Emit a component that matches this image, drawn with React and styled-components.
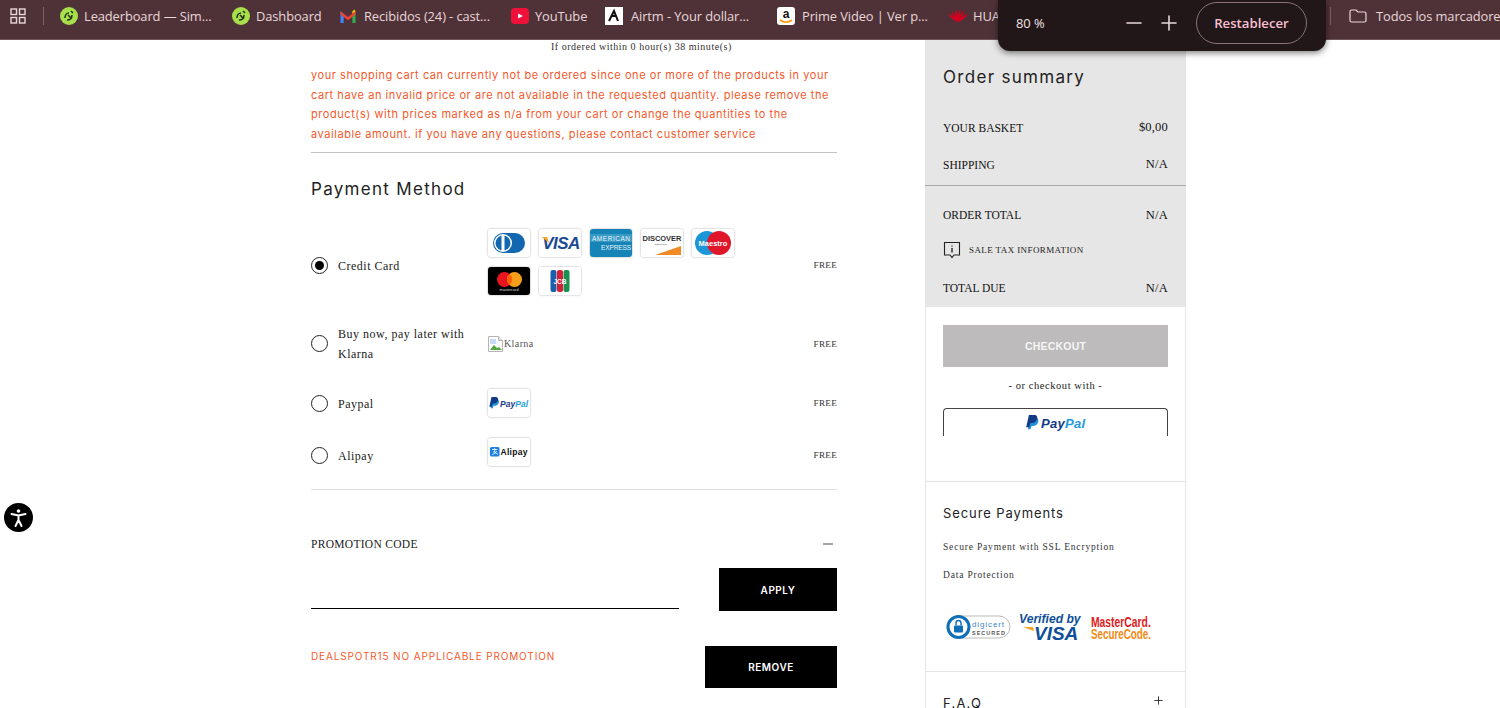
import React from "react";
import styled, { createGlobalStyle } from "styled-components";
import { Minus, Plus } from "lucide-react";

const Global = createGlobalStyle`
  html, body { margin: 0; padding: 0; background: #fff; height: 708px; overflow: hidden; }
  * { box-sizing: border-box; }
`;

const sans = `"Inter", "Liberation Sans", sans-serif`;
const serif = `"Liberation Serif", serif`;
const ui = `"Open Sans", "Noto Sans", sans-serif`;

const Page = styled.div`position: relative; width: 1500px; height: 708px; overflow: hidden;`;

/* browser bar */
const Bar = styled.header`
  height: 40px; background: #4f3238; border-bottom: 1px solid #6e565b; display: flex; align-items: center;
  padding-bottom: 8px; padding-left: 10px; overflow: hidden; white-space: nowrap;
  font: 12.9px ${ui}; color: #e9d7d8;
  svg { flex: none; }
`;
const BarDivider = styled.span`width: 1px; height: 18px; background: #7a6166; flex: none; margin: ${p => p.$m};`;
const Mark = styled.a`display: flex; align-items: center; gap: ${p => p.$gap || 6}px; flex: none; width: ${p => p.$w}px;`;
const MarkLabel = styled.span`letter-spacing: -0.1px;`;

const ZoomPop = styled.div`
  position: absolute; left: 998px; top: 0; width: 328px; height: 51px; background: #211618;
  border-radius: 0 0 12px 12px; box-shadow: 0 2px 6px rgba(0,0,0,.5);
  display: flex; align-items: center; color: #f1e4e5; font: 12.9px ${ui}; padding: 0 19px 6px 18px;
`;
const ZoomValue = styled.span`width: 100px;`;
const ZoomBtn = styled.span`width: 35px; display: flex; justify-content: center; color: #e6d8da;`;
const Reset = styled.span`
  margin-left: 10px; width: 111px; height: 42px; border: 1px solid #8a7276; border-radius: 21px; color: #f9c0d4;
  display: flex; align-items: center; justify-content: center; font-weight: 600; font-size: 13.2px;
`;

/* layout */
const Layout = styled.div`display: flex; padding-left: 311px; gap: 88px; align-items: flex-start;`;
const Main = styled.main`width: 526px; flex: none;`;
const Side = styled.aside`width: 261px; flex: none; border-right: 1px solid #e6e6e6; border-left: 1px solid #e6e6e6;`;

const Note = styled.div`font: 10px/12px ${serif}; letter-spacing: .52px; color: #333; padding: 1px 0 0 240px;`;
const ErrorText = styled.p`margin: 13px 0 0; font: 11px/19.6px ${sans}; letter-spacing: .56px; color: #f3592c;`;
const Rule = styled.hr`margin: ${p => p.$m || 0}; border: 0; height: 1px; background: ${p => p.$c || "#c4c4c4"};`;
const Heading = styled.h2`margin: 24px 0 0; font: 400 17px/24px ${sans}; letter-spacing: 1.3px; color: #222;`;

const Method = styled.label`
  display: grid; grid-template-columns: 27px 150px 1fr auto; align-items: center; margin-top: ${p => p.$top}px;
  min-height: ${p => p.$h}px;
`;
const Radio = styled.span`
  width: 17px; height: 17px; border-radius: 50%; border: 1.4px solid #222; display: flex; align-items: center; justify-content: center;
  &::after { content: ""; width: 9px; height: 9px; border-radius: 50%; background: #000; display: ${p => (p.$on ? "block" : "none")}; }
`;
const MethodName = styled.span`font: 12px/20px ${serif}; letter-spacing: .5px; color: #222; padding-top: 1px;`;
const Free = styled.span`font: 9.2px ${serif}; letter-spacing: .25px; color: #333;`;
const Cards = styled.div`display: flex; flex-wrap: wrap; gap: 10px 9px; width: 260px; align-self: ${p => (p.$top ? "start" : "center")};`;
const Card = styled.svg`width: 42px; height: 28px; flex: none; display: block; border-radius: 3px; box-shadow: 0 0 2px rgba(0,0,0,.4);`;
const Broken = styled.span`display: flex; align-items: center; font: 10px ${serif}; letter-spacing: .4px; color: #555;`;

const PromoHead = styled.div`display: flex; justify-content: space-between; align-items: center; margin-top: 46px; padding-right: 4px;`;
const PromoLabel = styled.span`font: 11.5px/16px ${serif}; letter-spacing: .3px; color: #222;`;
const Dash = styled.span`width: 10px; height: 2px; background: #a5a5a5;`;
const PromoRow = styled.div`display: flex; justify-content: space-between; align-items: flex-start; margin-top: ${p => p.$top}px;`;
const PromoInput = styled.div`width: 368px; height: 41px; border-bottom: 1.5px solid #000;`;
const BlackBtn = styled.button`
  width: ${p => p.$w}px; height: ${p => p.$h}px; background: #000; border: 0; color: #fff; padding: 0;
  font: 600 10px ${sans}; letter-spacing: .5px;
`;
const PromoMsg = styled.span`font: 10px/20px ${sans}; letter-spacing: .86px; color: #f3592c;`;

/* summary */
const Summary = styled.section`background: #e6e6e6; padding-top: 24px; height: 267px; margin: 0 -1px;`;
const SumTitle = styled.h3`margin: 0 0 19px; padding: 0 18px; font: 400 17px/26px ${sans}; letter-spacing: 1.3px; color: #222;`;
const SumRow = styled.div`display: flex; justify-content: space-between; align-items: center; height: 37px; padding: 0 18px; font: 11.5px ${serif}; letter-spacing: 0; color: #111;`;
const SumValue = styled.span`font-size: 12.5px; letter-spacing: .2px;`;
const SumRule = styled.hr`border: 0; height: 1px; background: #a9a9a9; margin: 1.5px 0 11px;`;
const TaxRow = styled.div`display: flex; align-items: center; gap: 8px; height: 28px; padding: 0 18px; margin: 2px 0 6px; font: 9px ${serif}; letter-spacing: .4px; color: #222;`;

const Action = styled.section`padding: 18px 17px 45px; border-bottom: 1px solid #e4e4e4;`;
const Checkout = styled.div`height: 42px; background: #bdbbbb; color: #f5f5f5; display: flex; align-items: center; justify-content: center; font: 700 10.5px "Liberation Sans", sans-serif; letter-spacing: .2px;`;
const OrWith = styled.div`margin-top: 11px; text-align: center; font: 10.5px/16px ${serif}; letter-spacing: .55px; color: #222;`;
const PayBtn = styled.div`
  margin-top: 14px; height: 28px; border: 1px solid #444; border-bottom: 0; border-radius: 4px 4px 0 0; display: flex; align-items: flex-start; justify-content: center; padding-top: 6px;
`;

const Secure = styled.section`padding: 22px 17px 31px; border-bottom: 1px solid #e4e4e4;`;
const SecureTitle = styled.h3`margin: 0 0 11px; font: 400 13px/18px ${sans}; letter-spacing: .9px; color: #222;`;
const SecureLine = styled.div`font: 9.5px/28px ${serif}; letter-spacing: .82px; color: #333;`;
const Seals = styled.div`margin-top: 23px; height: 28px; display: flex; align-items: center; padding-left: 3px;`;
const Faq = styled.section`padding: 22px 20px 0 17px; display: flex; justify-content: space-between; font: 13px/18px ${sans}; letter-spacing: 1.2px; color: #222;`;

const A11y = styled.div`position: absolute; left: 4px; top: 503px; width: 29px; height: 29px; border-radius: 50%; background: #000; display: flex; align-items: center; justify-content: center;`;

const Leaf = () => (
  <svg width="18" height="18" viewBox="0 0 18 18"><circle cx="9" cy="9" r="9" fill="#a8e04c" /><path d="M5 11c0-3 2-5 4-5M7 13c3 0 5-2 5-5M8 8l3 3M11 4l2 2" stroke="#26341c" strokeWidth="1.6" fill="none" /></svg>
);
const Gmail = () => (
  <svg width="18" height="14" viewBox="0 0 16 13"><path d="M1 13V2l3 2.500V13z" fill="#4285f4" /><path d="M12 13V4.500L15 2v11z" fill="#34a853" /><path d="M1 2l7 5.500L15 2v3L8 10.500 1 5z" fill="#ea4335" /><path d="M12 4.500L15 2l-1-1.500L12 2z" fill="#fbbc04" /></svg>
);
const Yt = () => (
  <svg width="18" height="18" viewBox="0 0 18 18"><rect x="0" y="1" width="18" height="16" rx="4" fill="#f0103a" /><path d="M7 6.500l5 2.500-5 2.500z" fill="#fff" /></svg>
);
const Airtm = () => (
  <svg width="18" height="18" viewBox="0 0 18 18"><rect width="18" height="18" fill="#fff" /><path d="M4 14l5-10 2 5H7m4 0l2 5" stroke="#111" strokeWidth="2" fill="none" /></svg>
);
const Amazon = () => (
  <svg width="18" height="18" viewBox="0 0 18 18"><rect width="18" height="18" rx="3" fill="#fff" /><text x="9" y="10.500" textAnchor="middle" fontSize="12" fontWeight="700" fontFamily="Liberation Sans" fill="#111">a</text><path d="M3 13c4 3 8 3 12 0" stroke="#f90" strokeWidth="1.600" fill="none" /></svg>
);
const Huawei = () => (
  <svg width="18" height="16" viewBox="0 0 18 16">{[-50, -30, -10, 10, 30, 50].map(a => <path key={a} d="M9 14C7.500 10 7.500 5 9 1c1.500 4 1.500 9 0 13z" fill="#d3001f" transform={`rotate(${a} 9 14)`} />)}</svg>
);
const Folder = () => (
  <svg width="18" height="16" viewBox="0 0 18 16"><path d="M1 3.500C1 2.500 1.500 2 2.500 2H7l2 2h6.500c1 0 1.500.5 1.500 1.500v7c0 1-.5 1.500-1.500 1.500h-13C1.500 14 1 13.500 1 12.500z" fill="none" stroke="#e9d7d8" strokeWidth="1.200" /></svg>
);
const Apps = () => (
  <svg width="16" height="16" viewBox="0 0 16 16" fill="none" stroke="#e9d7d8" strokeWidth="1.400"><rect x="1" y="1" width="5.500" height="5.500" /><rect x="9.500" y="1" width="5.500" height="5.500" /><rect x="1" y="9.500" width="5.500" height="5.500" /><rect x="9.500" y="9.500" width="5.500" height="5.500" /></svg>
);
const PMark = ({ x, y, s }) => (
  <g transform={`translate(${x} ${y}) scale(${s}) skewX(-6)`}>
    <path d="M4 3h5c3 0 4 2 3.500 4.500C12 10 10 11.500 7.500 11.500H6L5.300 15H2.500z" fill="#1f8fd6" />
    <path d="M2 0h5.500c3 0 4 2 3.500 4.500C10.500 7 8.500 8.500 6 8.500H4.500L3.700 13H.5z" fill="#123a87" />
  </g>
);

const Diners = () => (
  <Card viewBox="0 0 42 28"><rect width="42" height="28" fill="#fff" /><rect x="5" y="4" width="32" height="20" rx="10" fill="#1267b0" /><circle cx="15" cy="14" r="9" fill="#fff" /><circle cx="15" cy="14" r="7.500" fill="#1267b0" /><rect x="13.500" y="6" width="3" height="16" fill="#fff" /></Card>
);
const Visa = () => (
  <Card viewBox="0 0 42 28"><rect width="42" height="28" fill="#fff" /><text x="22" y="20" textAnchor="middle" fontSize="17" fontWeight="700" fontStyle="italic" fontFamily="Liberation Sans" fill="#1a4a94" letterSpacing="-.5">VISA</text><path d="M3 8l5 0 2 6z" fill="#f2a51e" /></Card>
);
const Amex = () => (
  <Card viewBox="0 0 42 28"><rect width="42" height="28" fill="#1684b6" /><rect y="5" width="42" height="8" fill="#5cb0d2" opacity=".5" /><text x="21" y="12" textAnchor="middle" fontSize="6.500" fontFamily="Liberation Sans" fill="#e7f5fb" textLength="38">AMERICAN</text><text x="26" y="21" textAnchor="middle" fontSize="6.500" fontFamily="Liberation Sans" fill="#e7f5fb" textLength="30">EXPRESS</text></Card>
);
const Discover = () => (
  <Card viewBox="0 0 42 28"><rect width="42" height="28" fill="#fff" /><text x="21" y="12" textAnchor="middle" fontSize="7.500" fontWeight="700" fontFamily="Liberation Sans" fill="#333" textLength="39">DISCOVER</text><text x="20" y="16" textAnchor="middle" fontSize="2.500" fontFamily="Liberation Sans" fill="#555">NETWORK</text><path d="M14 26L40 17v9z" fill="#f08a24" /></Card>
);
const Maestro = () => (
  <Card viewBox="0 0 42 28"><rect width="42" height="28" fill="#fff" /><circle cx="15" cy="14" r="12" fill="#1c96d8" /><circle cx="27" cy="14" r="12" fill="#e0162b" /><text x="21" y="16.500" textAnchor="middle" fontSize="7.500" fontWeight="700" fontFamily="Liberation Sans" fill="#fff">Maestro</text></Card>
);
const Master = () => (
  <Card viewBox="0 0 42 28"><rect width="42" height="28" fill="#000" /><circle cx="16.500" cy="12.500" r="7.500" fill="#e8141f" /><circle cx="26.500" cy="12.500" r="7.500" fill="#f79e1b" /><path d="M21.500 6.900a7.500 7.500 0 0 1 0 11.200 7.500 7.500 0 0 1 0-11.200z" fill="#ff5f00" /><text x="21" y="24" textAnchor="middle" fontSize="3.800" fontFamily="Liberation Sans" fill="#ddd">mastercard</text></Card>
);
const Jcb = () => (
  <Card viewBox="0 0 42 28"><rect width="42" height="28" fill="#fff" /><rect x="11.500" y="3" width="6" height="22" rx="2" fill="#1c5eaa" /><rect x="18" y="3" width="6" height="22" rx="2" fill="#d71f35" /><rect x="24.500" y="3" width="6" height="22" rx="2" fill="#1a9150" /><text x="21" y="17" textAnchor="middle" fontSize="6.500" fontWeight="700" fontFamily="Liberation Sans" fill="#fff">JCB</text></Card>
);
const PayPalCard = () => (
  <Card viewBox="0 0 42 28"><rect width="42" height="28" fill="#fff" /><PMark x={2} y={8} s={.75} /><text x="12" y="17.500" fontSize="8.500" fontWeight="700" fontStyle="italic" fontFamily="Liberation Sans" fill="#1b3c8c" textLength="28">Pay<tspan fill="#2a9fdc">Pal</tspan></text></Card>
);
const AlipayCard = () => (
  <Card viewBox="0 0 42 28"><rect width="42" height="28" fill="#fff" /><rect x="2" y="9" width="9.500" height="9.500" rx="1.500" fill="#1a7fe8" /><path d="M4 11.500h5.500M6.700 10v4M4 16.500c3-.5 4-2 4.500-3.500M5 14c2 0 3.500 1.500 5 2.500" stroke="#fff" strokeWidth=".8" fill="none" /><text x="12.500" y="17" fontSize="8.500" fontWeight="700" fontFamily="Liberation Sans" fill="#111" textLength="27">Alipay</text></Card>
);
const BrokenIcon = () => (
  <svg width="16" height="16" viewBox="0 0 16 16"><path d="M.5.500h10l4 4v11H.5z" fill="#fff" stroke="#b5b5b5" /><path d="M10.500.500v4h4" fill="#e8e8e8" stroke="#b5b5b5" /><path d="M2 14l4-5 3 3 2-1 3 3z" fill="#55a83c" /><rect x="2" y="3" width="6" height="5" fill="#c8d9f4" /></svg>
);
const TaxIcon = () => (
  <svg width="18" height="18" viewBox="0 0 18 18" fill="none" stroke="#222" strokeWidth="1.100"><path d="M1.500 1.500h15v12.500h-5.500L9 16.500 7 14H1.500z" /><path d="M9 4.500v1M9 7v4.500" strokeWidth="1.400" /></svg>
);
const PayPalLogo = () => (
  <svg width="60" height="16" viewBox="0 0 60 16"><PMark x={1} y={0} s={.95} /><text x="15" y="13" fontSize="13" fontWeight="700" fontStyle="italic" fontFamily="Liberation Sans" fill="#123a87" textLength="44">Pay<tspan fill="#1f9ade">Pal</tspan></text></svg>
);
const SealArt = () => (
  <svg width="220" height="36" viewBox="0 -3 220 36">
    <rect x="1" y="5" width="63" height="22" rx="11" fill="#fff" stroke="#bbb" />
    <circle cx="12.500" cy="16" r="10.500" fill="#fff" stroke="#0f6fb8" strokeWidth="3" />
    <rect x="8" y="14.500" width="9" height="7" rx="1" fill="#0f6fb8" />
    <path d="M10 14.500v-2.500a2.500 2.500 0 0 1 5 0v2.500" fill="none" stroke="#0f6fb8" strokeWidth="1.400" />
    <text x="26" y="16" fontSize="8" fontFamily="Liberation Sans" fill="#3c86c4" textLength="32">digicert</text>
    <text x="26" y="24" fontSize="5.500" fontWeight="700" fontFamily="Liberation Sans" fill="#555" textLength="33">SECURED</text>
    <text transform="translate(73 12) scale(.9 1)" fontSize="13.500" fontWeight="700" fontStyle="italic" fontFamily="Liberation Sans" fill="#0f4f9a">Verified by</text>
    <text x="88" y="28.500" fontSize="19" fontWeight="700" fontStyle="italic" fontFamily="Liberation Sans" fill="#0f4f9a">VISA</text>
    <path d="M77 16h10l1 4z" fill="#f2a51e" />
    <text transform="translate(145 15.500) scale(.74 1)" fontSize="14" fontWeight="700" fontFamily="Liberation Sans" fill="#e01b22">MasterCard.</text>
    <text transform="translate(145 28) scale(.7 1)" fontSize="14" fontWeight="700" fontFamily="Liberation Sans" fill="#f28a14">SecureCode.</text>
  </svg>
);

const marks = [
  { icon: <Leaf />, label: "Leaderboard — Sim...", w: 172 },
  { icon: <Leaf />, label: "Dashboard", w: 107 },
  { icon: <Gmail />, label: "Recibidos (24) - cast...", w: 172, gap: 7 },
  { icon: <Yt />, label: "YouTube", w: 94 },
  { icon: <Airtm />, label: "Airtm - Your dollar...", w: 172, gap: 8 },
  { icon: <Amazon />, label: "Prime Video | Ver p...", w: 172, gap: 7 },
  { icon: <Huawei />, label: "HUAWEI", w: 381 },
];

export default function App() {
  return (
    <Page>
      <Global />
      <Bar>
        <Apps />
        <BarDivider $m="0 16px 0 17px" />
        {marks.map(m => (
          <Mark key={m.label} $w={m.w} $gap={m.gap}>{m.icon}<MarkLabel>{m.label}</MarkLabel></Mark>
        ))}
        <BarDivider $m="0 18px 0 0" />
        <Mark $w={170} $gap={9}><Folder /><MarkLabel>Todos los marcadores</MarkLabel></Mark>
      </Bar>
      <Layout>
        <Main>
          <Note>If ordered within 0 hour(s) 38 minute(s)</Note>
          <ErrorText>
            your shopping cart can currently not be ordered since one or more of the products in your<br />
            cart have an invalid price or are not available in the requested quantity. please remove the<br />
            product(s) with prices marked as n/a from your cart or change the quantities to the<br />
            available amount. if you have any questions, please contact customer service
          </ErrorText>
          <Rule $m="8px 0 0" />
          <Heading>Payment Method</Heading>
          <Method $top={28} $h={72}>
            <Radio $on />
            <MethodName>Credit Card</MethodName>
            <Cards $top><Diners /><Visa /><Amex /><Discover /><Maestro /><Master /><Jcb /></Cards>
            <Free>FREE</Free>
          </Method>
          <Method $top={22} $h={40}>
            <Radio />
            <MethodName>Buy now, pay later with<br />Klarna</MethodName>
            <Broken><BrokenIcon />Klarna</Broken>
            <Free>FREE</Free>
          </Method>
          <Method $top={25} $h={28}>
            <Radio />
            <MethodName>Paypal</MethodName>
            <Cards $top><PayPalCard /></Cards>
            <Free>FREE</Free>
          </Method>
          <Method $top={21} $h={34}>
            <Radio />
            <MethodName>Alipay</MethodName>
            <Cards $top><AlipayCard /></Cards>
            <Free>FREE</Free>
          </Method>
          <Rule $m="17px 0 0" $c="#dedede" />
          <PromoHead><PromoLabel>PROMOTION CODE</PromoLabel><Dash /></PromoHead>
          <PromoRow $top={16}><PromoInput /><BlackBtn $w={118} $h={43}>APPLY</BlackBtn></PromoRow>
          <PromoRow $top={35}><PromoMsg>DEALSPOTR15 NO APPLICABLE PROMOTION</PromoMsg><BlackBtn $w={132} $h={42}>REMOVE</BlackBtn></PromoRow>
        </Main>
        <Side>
          <Summary>
            <SumTitle>Order summary</SumTitle>
            <SumRow><span>YOUR BASKET</span><SumValue>$0,00</SumValue></SumRow>
            <SumRow><span>SHIPPING</span><SumValue>N/A</SumValue></SumRow>
            <SumRule />
            <SumRow><span>ORDER TOTAL</span><SumValue>N/A</SumValue></SumRow>
            <TaxRow><TaxIcon />SALE TAX INFORMATION</TaxRow>
            <SumRow><span>TOTAL DUE</span><SumValue>N/A</SumValue></SumRow>
          </Summary>
          <Action>
            <Checkout>CHECKOUT</Checkout>
            <OrWith>- or checkout with -</OrWith>
            <PayBtn><PayPalLogo /></PayBtn>
          </Action>
          <Secure>
            <SecureTitle>Secure Payments</SecureTitle>
            <SecureLine>Secure Payment with SSL Encryption</SecureLine>
            <SecureLine>Data Protection</SecureLine>
            <Seals><SealArt /></Seals>
          </Secure>
          <Faq><span>F.A.Q</span><Plus size={13} strokeWidth={1.6} /></Faq>
        </Side>
      </Layout>
      <ZoomPop>
        <ZoomValue>80 %</ZoomValue>
        <ZoomBtn><Minus size={24} strokeWidth={1.6} /></ZoomBtn>
        <ZoomBtn><Plus size={24} strokeWidth={1.6} /></ZoomBtn>
        <Reset>Restablecer</Reset>
      </ZoomPop>
      <A11y>
        <svg width="21" height="21" viewBox="0 0 21 21" fill="none" stroke="#fff" strokeWidth="2" strokeLinecap="round"><circle cx="10.500" cy="4" r="1.800" fill="#fff" stroke="none" /><path d="M3.500 7l7 1.500 7-1.500M10.500 8.500v4.500M10.500 13l-3 6M10.500 13l3 6" /></svg>
      </A11y>
    </Page>
  );
}
